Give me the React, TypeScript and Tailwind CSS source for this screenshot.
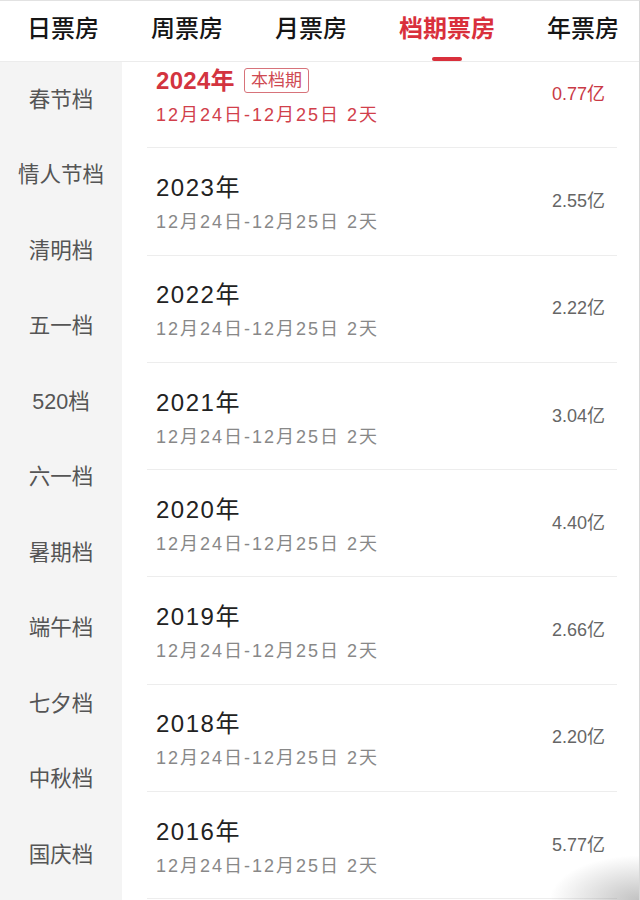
import React from "react";

const tabs = ["日票房", "周票房", "月票房", "档期票房", "年票房"];
const seasons = ["春节档", "情人节档", "清明档", "五一档", "520档", "六一档", "暑期档", "端午档", "七夕档", "中秋档", "国庆档"];
const rows = [
  { year: "2024年", value: "0.77亿", current: true },
  { year: "2023年", value: "2.55亿" },
  { year: "2022年", value: "2.22亿" },
  { year: "2021年", value: "3.04亿" },
  { year: "2020年", value: "4.40亿" },
  { year: "2019年", value: "2.66亿" },
  { year: "2018年", value: "2.20亿" },
  { year: "2016年", value: "5.77亿" },
];

const FONT = '"Liberation Sans", "Noto Sans CJK SC", sans-serif';

export default function App() {
  return (
    <div
      className="relative w-[640px] h-[900px] overflow-hidden bg-white border-t border-[#e2e2e2] border-r border-r-[#d8d8d8]"
      style={{ fontFamily: FONT }}
    >
      {/* Tabs */}
      <div className="h-[61px] flex items-start pl-[27px] gap-[52px] border-b border-[#ececec]">
        {tabs.map((t) => {
          const active = t === "档期票房";
          return (
            <div key={t} className="relative h-[60px] flex flex-col items-center">
              <span
                className={
                  "mt-[10px] text-[24px] leading-[32px] " +
                  (active ? "text-[#d9303c] font-bold" : "text-[#151515] font-medium")
                }
                style={{ fontFamily: '"Noto Sans CJK SC", sans-serif' }}
              >
                {t}
              </span>
              {active && <div className="absolute bottom-[0px] w-[30px] h-[4px] rounded-full bg-[#d9303c]" />}
            </div>
          );
        })}
      </div>

      <div className="flex h-[838px]">
        {/* Sidebar */}
        <div className="w-[122px] shrink-0 bg-[#f4f4f4] flex flex-col">
          {seasons.map((s) => (
            <div
              key={s}
              className="h-[75.5px] shrink-0 flex items-center justify-center text-[21.5px] text-[#555555]"
            >
              {s}
            </div>
          ))}
        </div>

        {/* List */}
        <div className="flex-1 overflow-hidden">
          <div className="-mt-[21px] pl-[25px] pr-[22px]">
            {rows.map((r) => (
              <div
                key={r.year}
                className="h-[107.3px] flex items-center justify-between border-b border-[#ededed]"
              >
                <div className="flex flex-col pl-[9px] pt-[4px]">
                  <div className="flex items-center h-[32px]">
                    <span
                      className={
                        "text-[24px] leading-[32px] " +
                        (r.current ? "text-[#d3343f] font-bold tracking-[0.3px]" : "text-[#222222] tracking-[1.5px]")
                      }
                    >
                      {r.year}
                    </span>
                    {r.current && (
                      <span className="ml-[9px] h-[25px] px-[6px] flex items-center border border-[#d7737a] rounded-[3px] text-[17px] text-[#cf4a53]">
                        本档期
                      </span>
                    )}
                  </div>
                  <div
                    className={
                      "mt-[5px] text-[18px] leading-[26px] tracking-[2px] " +
                      (r.current ? "text-[#d1404b]" : "text-[#888888]")
                    }
                  >
                    12月24日-12月25日 2天
                  </div>
                </div>
                <div
                  className={
                    "text-[18px] pr-[12px] " + (r.current ? "text-[#c93a45]" : "text-[#666666]")
                  }
                >
                  {r.value}
                </div>
              </div>
            ))}
          </div>
        </div>
      </div>

      {/* corner shadow artifact */}
      <div className="pointer-events-none absolute right-0 bottom-0 w-[90px] h-[45px] bg-[radial-gradient(ellipse_at_bottom_right,rgba(120,120,120,0.45),rgba(255,255,255,0)_70%)]" />
    </div>
  );
}
